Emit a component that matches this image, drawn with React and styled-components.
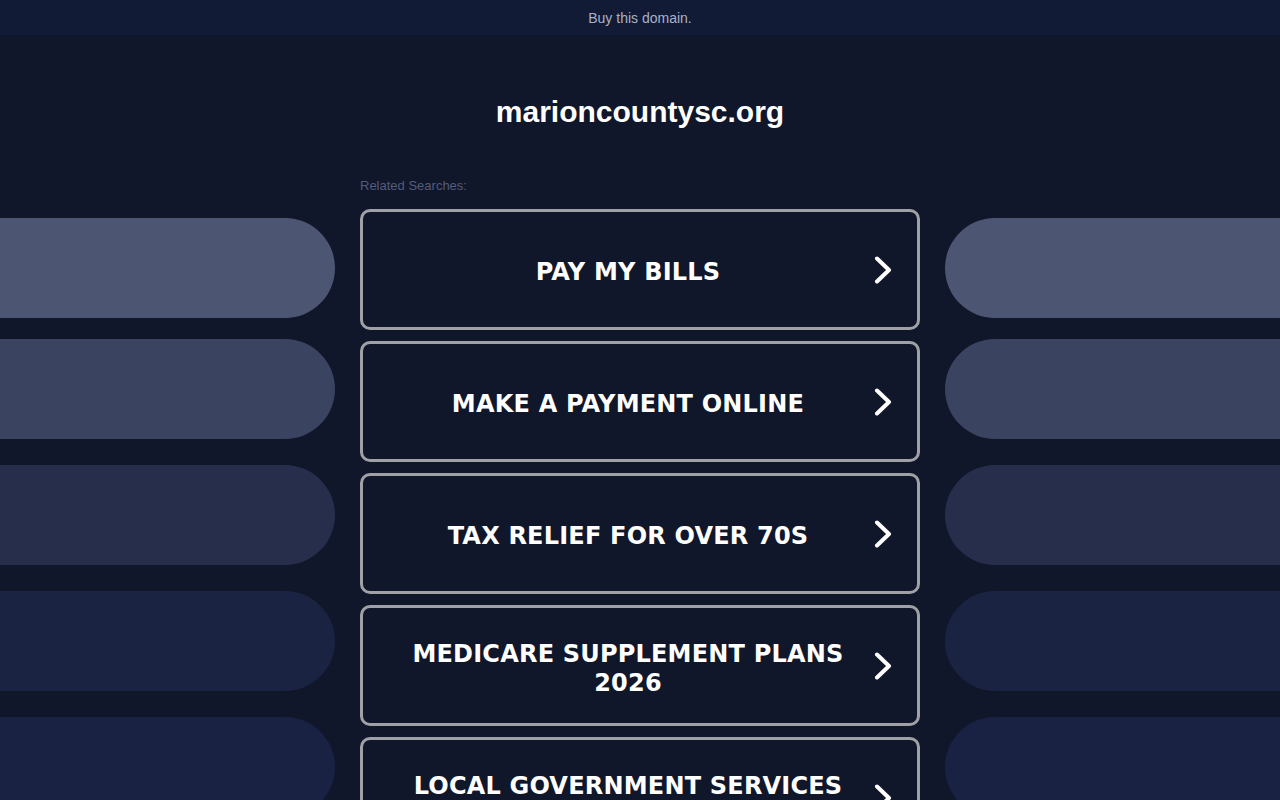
import React from 'react'
import styled, { createGlobalStyle } from 'styled-components'

const searches = [
  ['PAY MY BILLS'],
  ['MAKE A PAYMENT ONLINE'],
  ['TAX RELIEF FOR OVER 70S'],
  ['MEDICARE SUPPLEMENT PLANS 2026'],
  ['LOCAL GOVERNMENT SERVICES NEAR ME'],
]

// background pills on both sides, lightest at the top
const pills = [
  { color: '#4c5673', gap: 0 },
  { color: '#3a435f', gap: 21 },
  { color: '#262e4c', gap: 26 },
  { color: '#1b2342', gap: 26 },
  { color: '#1a2244', gap: 26 },
]

export default function App() {
  return (
    <React.Fragment>
      <GlobalStyle />
      <Page>
        <TopBar>
          <BuyLink href="#">Buy this domain.</BuyLink>
        </TopBar>
        <DomainTitle>marioncountysc.org</DomainTitle>
        <Columns>
          <SideColumn>
            {pills.map((p, i) => (
              <Pill key={i} $side="left" $color={p.color} $gap={p.gap} />
            ))}
          </SideColumn>
          <Center>
            <RelatedLabel>Related Searches:</RelatedLabel>
            <CardList>
              {searches.map(([label]) => (
                <SearchCard key={label} href="#">
                  <CardText>{label}</CardText>
                  <Chevron viewBox="0 0 18 28" aria-hidden="true">
                    <polyline
                      points="3,2.5 15,14 3,25.5"
                      fill="none"
                      stroke="#ffffff"
                      strokeWidth="4"
                      strokeLinecap="round"
                      strokeLinejoin="round"
                    />
                  </Chevron>
                </SearchCard>
              ))}
            </CardList>
          </Center>
          <SideColumn>
            {pills.map((p, i) => (
              <Pill key={i} $side="right" $color={p.color} $gap={p.gap} />
            ))}
          </SideColumn>
        </Columns>
      </Page>
    </React.Fragment>
  )
}

const GlobalStyle = createGlobalStyle`
  html, body {
    margin: 0;
    padding: 0;
    background: #10172b;
    overflow: hidden;
  }
`

const Page = styled.div`
  min-height: 100vh;
  background: #10172b;
  font-family: "Liberation Sans", Arial, sans-serif;
`

const TopBar = styled.div`
  height: 35px;
  background: #111b35;
  display: flex;
  align-items: center;
  justify-content: center;
`

const BuyLink = styled.a`
  font-size: 14px;
  color: #a9b1c5;
  text-decoration: none;
  line-height: 1;
  padding-top: 1px;
`

const DomainTitle = styled.h1`
  margin: 0 0 41px;
  padding-top: 60px;
  text-align: center;
  font-size: 30px;
  line-height: 34px;
  font-weight: 700;
  color: #ffffff;
`

const Columns = styled.div`
  display: grid;
  grid-template-columns: 335px 560px 335px;
  column-gap: 25px;
`

const SideColumn = styled.div`
  display: flex;
  flex-direction: column;
  padding-top: 48px;
`

const Pill = styled.div`
  height: 100px;
  margin-top: ${p => p.$gap}px;
  background: ${p => p.$color};
  border-radius: ${p => (p.$side === 'left' ? '0 50px 50px 0' : '50px 0 0 50px')};
`

const Center = styled.div`
  display: flex;
  flex-direction: column;
`

const RelatedLabel = styled.div`
  font-size: 13px;
  line-height: 30px;
  padding-top: 1px;
  color: #535c7a;
  margin-bottom: 8px;
`

const CardList = styled.div`
  display: flex;
  flex-direction: column;
  gap: 11px;
`

const SearchCard = styled.a`
  box-sizing: border-box;
  height: 121px;
  display: flex;
  align-items: center;
  padding: 0 25px 0 21px;
  border: 3px solid #a0a1a7;
  border-radius: 10px;
  background: #10172b;
  text-decoration: none;
`

const CardText = styled.span`
  flex: 1;
  padding-top: 6px;
  text-align: center;
  font-family: "DejaVu Sans", Verdana, sans-serif;
  font-weight: 700;
  font-size: 24px;
  line-height: 29px;
  letter-spacing: 0.2px;
  color: #ffffff;
`

const Chevron = styled.svg`
  width: 18px;
  height: 28px;
  flex-shrink: 0;
  margin-left: 2px;
`
